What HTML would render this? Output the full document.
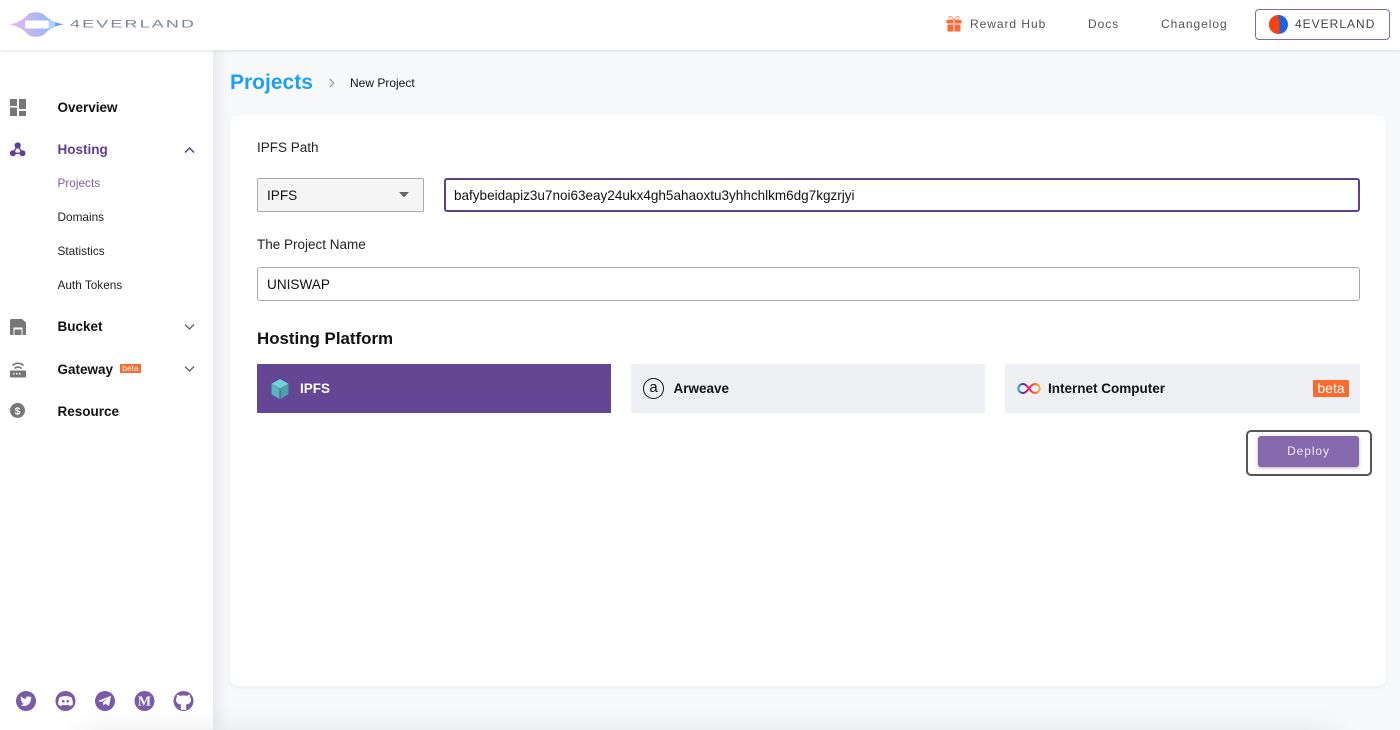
<!DOCTYPE html>
<html lang="en"><head><meta charset="utf-8"><title>4EVERLAND</title>
<style>
*{box-sizing:border-box}
html,body{margin:0;padding:0;overflow:hidden;width:1400px;height:730px}
body{position:relative;background:#f8f9fb;font-family:"Liberation Sans",Arial,sans-serif;color:#111}
.a{position:absolute;white-space:nowrap}
.nav{font-size:13.5px;font-weight:700;left:57.5px;line-height:22px;color:#111}
.sub{font-size:11.8px;left:57.5px;line-height:18px;color:#222}
.top{font-size:12px;letter-spacing:.95px;color:#555;line-height:20px;top:14px}
.lab{font-size:13.5px;line-height:22px;color:#222}
.field{font-size:13.6px;line-height:22px;color:#111}
.pl{font-size:13.5px;line-height:22px;font-weight:700;top:378px;color:#111}
svg{position:absolute;display:block}
</style></head><body>

<!-- sidebar -->
<div class="a" style="left:0;top:50px;width:213px;height:680px;background:#fff;box-shadow:4px 0 14px rgba(40,50,70,.10)"></div>

<!-- bottom shading -->
<div class="a" style="left:0;top:680px;width:1400px;height:50px;overflow:hidden"><div class="a" style="left:90px;top:62px;width:1240px;height:10px;box-shadow:0 0 30px 6px rgba(30,35,50,.15)"></div></div>

<!-- header -->
<div class="a" style="left:0;top:0;width:1400px;height:50px;background:#fff;box-shadow:0 1px 4px rgba(40,50,70,.14)"></div>

<svg style="left:9px;top:11px" width="56" height="27" viewBox="0 0 56 27">
<defs><linearGradient id="lg" x1="0" x2="1"><stop offset="0" stop-color="#f4b0f4"/><stop offset=".4" stop-color="#c0b6f3"/><stop offset=".75" stop-color="#8fbdf8"/><stop offset="1" stop-color="#2f8ef5"/></linearGradient></defs>
<path d="M0.500 13.300C8 12.500 14 9 19 3.500C22 0.500 31 0.500 35 3.500C40 9 46 12 55 13.300C46 14.800 40 18 35 23.500C31 26.500 22 26.500 19 23.500C14 18 8 15 0.500 13.300Z" fill="url(#lg)"/>
<rect x="16" y="9.500" width="24" height="8" rx="1" fill="#fff"/>
<rect x="39" y="9.500" width="7" height="8" fill="#cfe3fb" opacity=".6"/>
</svg>
<div class="a" style="left:70px;top:15px;font-size:13px;line-height:18px;color:#7c8798;letter-spacing:1.6px;transform-origin:0 50%;transform:scale(1.375,.85);font-weight:400">4EVERLAND</div>

<svg style="left:946px;top:15px" width="16" height="17" viewBox="0 0 16 17">
<path d="M8 5C6 1 3 0.500 2.800 2.500C2.700 4 5 5 8 5C11 5 13.300 4 13.200 2.500C13 0.500 10 1 8 5Z" fill="none" stroke="#f6a07e" stroke-width="1"/>
<path d="M0.500 5H15.500V8.500H0.500ZM1.500 9.500H14.500V16.500H1.500Z" fill="#f9693a"/><rect x="7" y="5" width="2" height="11.500" fill="#fdb79c"/>
</svg>
<div class="a top" style="left:970px">Reward Hub</div>
<div class="a top" style="left:1088px">Docs</div>
<div class="a top" style="left:1161px">Changelog</div>
<div class="a" style="left:1255px;top:9px;width:135px;height:31px;border:1px solid #8569ac;border-radius:4px;background:#fff"></div>
<svg style="left:1269px;top:15px" width="19" height="19" viewBox="0 0 19 19"><circle cx="9.500" cy="9.500" r="9.500" fill="#1d63df"/><path d="M9.500 0A9.500 9.500 0 0 0 9.500 19H10.500V4.500H9.500Z" fill="#f8420f"/></svg>
<div class="a top" style="left:1295px;color:#444;letter-spacing:1px">4EVERLAND</div>

<!-- sidebar items -->
<svg style="left:10px;top:99px" width="16" height="17" viewBox="0 0 16 17" fill="#777"><rect width="7" height="7"/><rect x="9" width="7" height="10"/><rect y="8.500" width="7" height="8.500"/><rect x="9" y="12" width="7" height="5"/></svg>
<div class="a nav" style="top:97px">Overview</div>

<svg style="left:10px;top:142px" width="16" height="16" viewBox="0 0 16 16" fill="#5f3f94"><circle cx="7.700" cy="3.500" r="3.100"/><circle cx="2.900" cy="11.300" r="3"/><circle cx="12.500" cy="11.300" r="3"/><path d="M7.700 3.500L2.900 11.300H12.500Z" fill="none" stroke="#5f3f94" stroke-width="1.400"/></svg>
<div class="a nav" style="top:139px;color:#5f3f94">Hosting</div>
<svg style="left:184px;top:146px" width="11" height="8" viewBox="0 0 11 8"><path d="M1 6.500L5.500 2L10 6.500" fill="none" stroke="#5f3f94" stroke-width="1.500"/></svg>
<div class="a sub" style="top:174px;color:#7a5cad">Projects</div>
<div class="a sub" style="top:208px">Domains</div>
<div class="a sub" style="top:242px">Statistics</div>
<div class="a sub" style="top:276px">Auth Tokens</div>

<svg style="left:10px;top:319px" width="16" height="16" viewBox="0 0 16 16"><path d="M1 0H12L16 3.500V16H0V1Z" fill="#777"/><rect x="3.500" y="8.500" width="9" height="7.500" fill="#fff"/><rect x="4.500" y="10.500" width="7" height="5.500" fill="#777"/></svg>
<div class="a nav" style="top:316px">Bucket</div>
<svg style="left:184px;top:323px" width="11" height="8" viewBox="0 0 11 8"><path d="M1 1.500L5.500 6L10 1.500" fill="none" stroke="#666" stroke-width="1.400"/></svg>

<svg style="left:10px;top:360px" width="16" height="18" viewBox="0 0 16 18"><path d="M2.500 5.500A8 8 0 0 1 13.500 5.500M4.500 8.500A5 5 0 0 1 11.500 8.500" fill="none" stroke="#777" stroke-width="1.700"/><rect y="10.500" width="16" height="7" rx="1" fill="#777"/><rect x="3" y="13" width="1.500" height="1.500" fill="#fff"/><rect x="6" y="13" width="1.500" height="1.500" fill="#fff"/><rect x="9" y="13" width="1.500" height="1.500" fill="#fff"/></svg>
<div class="a nav" style="top:359px">Gateway</div>
<div class="a" style="left:120px;top:364px;width:21px;height:9px;background:#fb6a2b;color:#fff;font-size:8.500px;line-height:9px;text-align:center">beta</div>
<svg style="left:184px;top:365px" width="11" height="8" viewBox="0 0 11 8"><path d="M1 1.500L5.500 6L10 1.500" fill="none" stroke="#666" stroke-width="1.400"/></svg>

<svg style="left:10px;top:403px" width="15" height="15" viewBox="0 0 15 15"><circle cx="7.500" cy="7.500" r="7.500" fill="#777"/><text x="7.500" y="11.300" text-anchor="middle" font-family="Liberation Sans" font-weight="700" font-size="10.500" fill="#fff">$</text></svg>
<div class="a nav" style="top:401px">Resource</div>

<!-- social -->
<svg style="left:16px;top:691px" width="178" height="20" viewBox="0 0 178 20">
<circle cx="10" cy="10" r="10" fill="#7a5ba8"/><circle cx="49.500" cy="10" r="10" fill="#7a5ba8"/><circle cx="89" cy="10" r="10" fill="#7a5ba8"/><circle cx="128.500" cy="10" r="10" fill="#7a5ba8"/><circle cx="167.500" cy="10" r="10" fill="#7a5ba8"/>
<path d="M15.500 6.300C15 6.500 14.500 6.700 14 6.700C14.500 6.400 14.900 5.900 15.100 5.400C14.600 5.700 14.100 5.900 13.500 6C12.200 4.600 9.600 5.700 10 7.800C8 7.700 6.200 6.700 5 5.200C4.300 6.400 4.700 7.900 5.800 8.700C5.400 8.700 5 8.600 4.700 8.400C4.700 9.700 5.600 10.700 6.800 11C6.400 11.100 6 11.100 5.600 11C6 12.100 7 12.800 8.100 12.800C7 13.700 5.700 14.100 4.300 13.900C9.500 16.800 15.300 13.300 14.900 7.500C15.300 7.200 15.700 6.800 15.500 6.300Z" fill="#fff"/>
<path d="M43.500 6.500C47 4.500 52 4.500 55.500 6.500C56.500 8.500 57 11 56.800 13.500C55.500 14.500 54.500 14.800 53.500 15L52.800 13.700C50.500 14.300 48.500 14.300 46.200 13.700L45.500 15C44.500 14.800 43.500 14.500 42.200 13.500C42 11 42.500 8.500 43.500 6.500Z" fill="#fff"/><circle cx="47.300" cy="10.300" r="1.300" fill="#7a5ba8"/><circle cx="51.700" cy="10.300" r="1.300" fill="#7a5ba8"/>
<path d="M82 10L95 4.800L93 15L89.300 12.700L87.500 14.500L87 11.500L92 7L85.500 11Z" fill="#fff"/>
<text x="128.500" y="14.500" text-anchor="middle" font-family="Liberation Serif" font-weight="700" font-size="14" fill="#fff">M</text>
<path d="M164.800 18.800V15.500C164.800 14.500 165 14 165.400 13.600C162.400 13.300 160 12 160 8.800C160 7.800 160.300 7 161 6.300C160.800 5.500 160.800 4.600 161.200 3.800C162 3.800 163 4.200 164 4.900C166 4.400 169 4.400 171 4.900C172 4.200 173 3.800 173.800 3.800C174.200 4.600 174.200 5.500 174 6.300C174.700 7 175 7.800 175 8.800C175 12 172.600 13.300 169.600 13.600C170 14 170.200 14.500 170.200 15.500V18.800Z" fill="#fff"/>
</svg>

<!-- breadcrumb -->
<div class="a" style="left:230px;top:69px;font-size:21px;line-height:28px;font-weight:700;color:#1ea0f6">Projects</div>
<svg style="left:328px;top:78px" width="8" height="10" viewBox="0 0 8 10"><path d="M1.800 1L5.800 5L1.800 9" fill="none" stroke="#8c8c8c" stroke-width="1.100"/></svg>
<div class="a" style="left:350px;top:74px;font-size:12px;line-height:18px;color:#111">New Project</div>

<!-- card -->
<div class="a" style="left:230px;top:115px;width:1156px;height:571px;background:#fff;border-radius:8px;box-shadow:0 1px 3px rgba(40,50,70,.08)"></div>

<div class="a lab" style="left:257px;top:137px">IPFS Path</div>
<div class="a" style="left:257px;top:178px;width:167px;height:34px;background:#f5f5f5;border:1px solid #a9a9a9;border-radius:2px"></div>
<div class="a field" style="left:267px;top:185px">IPFS</div>
<svg style="left:399px;top:192px" width="10" height="6" viewBox="0 0 10 6"><path d="M0 0H10L5 5.500Z" fill="#666"/></svg>
<div class="a" style="left:444px;top:178px;width:916px;height:34px;background:#fff;border:2px solid #5f3f94;border-radius:3px"></div>
<div class="a field" style="left:454px;top:185px;font-size:13.530px">bafybeidapiz3u7noi63eay24ukx4gh5ahaoxtu3yhhchlkm6dg7kgzrjyi</div>

<div class="a lab" style="left:257px;top:234px">The Project Name</div>
<div class="a" style="left:257px;top:267px;width:1103px;height:34px;background:#fff;border:1px solid #a9a9a9;border-radius:3px"></div>
<div class="a field" style="left:267px;top:274px">UNISWAP</div>

<div class="a" style="left:257px;top:328px;font-size:16.900px;line-height:22px;font-weight:700;color:#111">Hosting Platform</div>

<!-- platforms -->
<div class="a" style="left:257px;top:364px;width:354px;height:49px;background:#644694"></div>
<svg style="left:271px;top:379px" width="18" height="20" viewBox="0 0 18 20"><path d="M9 0L17.500 4.800L9 9.800L0.500 4.800Z" fill="#6fd3dc"/><path d="M0.500 5L8.500 10V20L0.500 15.200Z" fill="#57b5bd"/><path d="M17.500 5L9.500 10V20L17.500 15.200Z" fill="#4a9fa8"/></svg>
<div class="a pl" style="left:300px;color:#fff">IPFS</div>

<div class="a" style="left:631px;top:364px;width:354px;height:49px;background:#eef0f4"></div>
<div class="a" style="left:643px;top:378px;width:21px;height:21px;border:1.800px solid #111;border-radius:50%;text-align:center;font-size:15px;line-height:18px;font-weight:400;color:#111">a</div>
<div class="a pl" style="left:673.500px">Arweave</div>

<div class="a" style="left:1005px;top:364px;width:355px;height:49px;background:#eef0f4"></div>
<svg style="left:1017px;top:382px" width="24" height="13" viewBox="0 0 24 13">
<defs><linearGradient id="i1" x1="0" x2="1"><stop offset="0" stop-color="#29abe2"/><stop offset=".5" stop-color="#522785"/><stop offset="1" stop-color="#ed1e79"/></linearGradient><linearGradient id="i2" x1="0" x2="1"><stop offset="0" stop-color="#ed1e79"/><stop offset=".45" stop-color="#f15a24"/><stop offset="1" stop-color="#fbb03b"/></linearGradient></defs>
<path d="M12 6.500C10 4 8.500 2 6 2C3.500 2 1.300 4 1.300 6.500C1.300 9 3.500 11 6 11C8.500 11 10 9 12 6.500Z" fill="none" stroke="url(#i1)" stroke-width="2"/>
<path d="M12 6.500C14 9 15.500 11 18 11C20.500 11 22.700 9 22.700 6.500C22.700 4 20.500 2 18 2C15.500 2 14 4 12 6.500Z" fill="none" stroke="url(#i2)" stroke-width="2"/>
</svg>
<div class="a pl" style="left:1048px">Internet Computer</div>
<div class="a" style="left:1313px;top:380px;width:36px;height:17px;background:#fb6a2b;color:#fff;font-size:14px;line-height:17px;text-align:center;border-radius:1px">beta</div>

<!-- deploy -->
<div class="a" style="left:1246px;top:430px;width:126px;height:46px;border:2px solid #555;border-radius:5px;background:#fff"></div>
<div class="a" style="left:1258px;top:436px;width:101px;height:31px;background:#8569ac;border-radius:3px;box-shadow:0 1px 3px rgba(0,0,0,.3);color:#f0ecf6;font-size:12px;line-height:31px;text-align:center;letter-spacing:.9px">Deploy</div>

</body></html>
